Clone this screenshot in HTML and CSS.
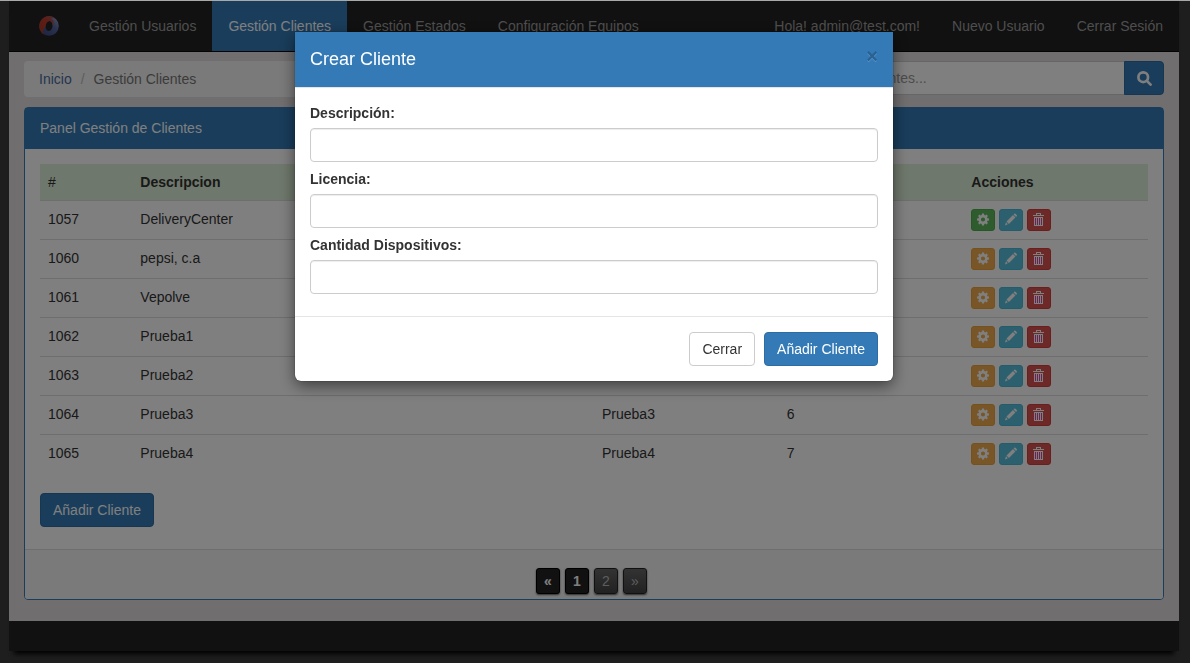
FILE: index.html
```html
<!DOCTYPE html>
<html lang="es">
<head>
<meta charset="utf-8">
<meta name="viewport" content="width=device-width, initial-scale=1">
<title>Gestión Clientes</title>
<link rel="stylesheet" href="styles.css">
</head>
<body>
<svg class="sprite" aria-hidden="true">
  <symbol id="cog" viewBox="0 0 12 12"><path fill-rule="evenodd" d="M5 0h2l.3 1.6 1 .4 1.3-.9 1.3 1.3-.9 1.3.4 1L12 5v2l-1.6.3-.4 1 .9 1.3-1.3 1.3-1.3-.9-1 .4L7 12H5l-.3-1.6-1-.4-1.3.9-1.3-1.3.9-1.3-.4-1L0 7V5l1.600-.3.4-1-.9-1.300 1.300-1.300 1.300.9 1-.4zM6 3.900A2.100 2.100 0 1 0 6 8.100 2.100 2.100 0 0 0 6 3.900z"/></symbol>
  <symbol id="pencil" viewBox="0 0 12 12"><path d="M0 12l1-3.300L2.800 10.700zM1.500 8L8 1.600 10.400 4 3.900 10.500zM8.600 1L9.300.3Q9.800-.2 10.400.3L11.700 1.600Q12.200 2.200 11.700 2.700L11 3.400z"/></symbol>
  <symbol id="trash" viewBox="0 0 12 13"><path class="bin" d="M1 4h9v8H1z"/><path fill-rule="evenodd" d="M3 0h5v2h3v1H0V2h3zM4 1v1h3V1zM1 4h9v9H1zM2 5V12h1V5zM4 5V12h1V5zM6 5V12h1V5zM8 5V12h1V5z"/></symbol>
</svg>

<div class="page">
  <nav class="navbar">
    <a class="brand" href="#" aria-label="Inicio">
      <svg class="logo" viewBox="0 0 20 20" aria-hidden="true">
        <defs>
          <linearGradient id="red" x1="1" y1="0" x2="0" y2="1"><stop offset="0" stop-color="#8a5f60"/><stop offset=".4" stop-color="#c0392b"/><stop offset="1" stop-color="#a23b20"/></linearGradient>
          <linearGradient id="blue" x1="1" y1="0" x2="0" y2="1"><stop offset="0" stop-color="#a9a4c2"/><stop offset=".4" stop-color="#53649f"/><stop offset="1" stop-color="#363f7c"/></linearGradient>
        </defs>
        <path fill="url(#blue)" fill-rule="evenodd" d="M10 .2A9.800 9.800 0 1 1 10 19.800 9.800 9.800 0 0 1 10 .2zM10.500 5C8 5 6.500 8 6.500 10.500S8 15 10 15 13.500 12 13.500 9.500 12.500 5 10.500 5z"/>
        <path fill="url(#red)" d="M16 2.200Q11-1.500 6 1 0 4.500.2 11 .8 16 5 18.600 2.500 14 6.500 10.500 7 5.500 10.500 5 13.500 5.500 13.500 9.500 16.500 4.500 12 2.500 14 1.500 16 2.200z"/>
      </svg>
    </a>
    <ul class="nav">
      <li><a href="#">Gestión Usuarios</a></li>
      <li><a class="active" href="#">Gestión Clientes</a></li>
      <li><a href="#">Gestión Estados</a></li>
      <li><a href="#">Configuración Equipos</a></li>
    </ul>
    <ul class="nav nav-right">
      <li><a href="#">Hola! admin@test.com!</a></li>
      <li><a href="#">Nuevo Usuario</a></li>
      <li><a href="#">Cerrar Sesión</a></li>
    </ul>
  </nav>

  <main class="content">
    <div class="toolbar">
      <ol class="breadcrumb">
        <li><a href="#">Inicio</a></li>
        <li>Gestión Clientes</li>
      </ol>
      <form class="search">
        <input type="text" aria-label="Buscar clientes" placeholder="Buscar Clientes...">
        <button type="button" aria-label="Buscar">
          <svg viewBox="0 0 14 14" aria-hidden="true"><circle cx="5.800" cy="5.800" r="4.500"/><path d="M9.200 9.200L12.700 12.700"/></svg>
        </button>
      </form>
    </div>

    <section class="panel">
      <header class="panel-heading">Panel Gestión de Clientes</header>
      <div class="panel-body">
        <table class="clients">
          <thead>
            <tr><th class="col-id">#</th><th class="col-name">Descripcion</th><th class="col-mid">Licencia</th><th class="col-mid">Dispositivos</th><th class="col-mid">Acciones</th></tr>
          </thead>
          <tbody>
            <tr><td>1057</td><td>DeliveryCenter</td><td></td><td></td><td><div class="actions"><button class="green" aria-label="Configurar"><svg><use href="#cog"/></svg></button><button class="cyan" aria-label="Editar"><svg><use href="#pencil"/></svg></button><button class="red" aria-label="Eliminar"><svg><use href="#trash"/></svg></button></div></td></tr>
            <tr><td>1060</td><td>pepsi, c.a</td><td></td><td></td><td><div class="actions"><button class="orange" aria-label="Configurar"><svg><use href="#cog"/></svg></button><button class="cyan" aria-label="Editar"><svg><use href="#pencil"/></svg></button><button class="red" aria-label="Eliminar"><svg><use href="#trash"/></svg></button></div></td></tr>
            <tr><td>1061</td><td>Vepolve</td><td></td><td></td><td><div class="actions"><button class="orange" aria-label="Configurar"><svg><use href="#cog"/></svg></button><button class="cyan" aria-label="Editar"><svg><use href="#pencil"/></svg></button><button class="red" aria-label="Eliminar"><svg><use href="#trash"/></svg></button></div></td></tr>
            <tr><td>1062</td><td>Prueba1</td><td></td><td></td><td><div class="actions"><button class="orange" aria-label="Configurar"><svg><use href="#cog"/></svg></button><button class="cyan" aria-label="Editar"><svg><use href="#pencil"/></svg></button><button class="red" aria-label="Eliminar"><svg><use href="#trash"/></svg></button></div></td></tr>
            <tr><td>1063</td><td>Prueba2</td><td></td><td></td><td><div class="actions"><button class="orange" aria-label="Configurar"><svg><use href="#cog"/></svg></button><button class="cyan" aria-label="Editar"><svg><use href="#pencil"/></svg></button><button class="red" aria-label="Eliminar"><svg><use href="#trash"/></svg></button></div></td></tr>
            <tr><td>1064</td><td>Prueba3</td><td>Prueba3</td><td>6</td><td><div class="actions"><button class="orange" aria-label="Configurar"><svg><use href="#cog"/></svg></button><button class="cyan" aria-label="Editar"><svg><use href="#pencil"/></svg></button><button class="red" aria-label="Eliminar"><svg><use href="#trash"/></svg></button></div></td></tr>
            <tr><td>1065</td><td>Prueba4</td><td>Prueba4</td><td>7</td><td><div class="actions"><button class="orange" aria-label="Configurar"><svg><use href="#cog"/></svg></button><button class="cyan" aria-label="Editar"><svg><use href="#pencil"/></svg></button><button class="red" aria-label="Eliminar"><svg><use href="#trash"/></svg></button></div></td></tr>
          </tbody>
        </table>
        <button class="btn btn-primary" type="button">Añadir Cliente</button>
      </div>
      <footer class="panel-footer">
        <a class="page-link current" href="#">«</a>
        <a class="page-link current" href="#">1</a>
        <a class="page-link" href="#">2</a>
        <a class="page-link" href="#">»</a>
      </footer>
    </section>
  </main>
  <div class="page-footer"></div>
</div>

<div class="backdrop">
  <form class="modal" role="dialog" aria-modal="true" aria-labelledby="modal-title">
    <div class="modal-header">
      <h1 id="modal-title">Crear Cliente</h1>
      <button class="close" type="button" aria-label="Cerrar ventana">×</button>
    </div>
    <div class="modal-body">
      <label for="descripcion">Descripción:</label>
      <input id="descripcion" type="text">
      <label for="licencia">Licencia:</label>
      <input id="licencia" type="text">
      <label for="cantidad">Cantidad Dispositivos:</label>
      <input id="cantidad" type="text">
    </div>
    <div class="modal-footer">
      <button class="btn btn-default" type="button">Cerrar</button>
      <button class="btn btn-primary" type="button">Añadir Cliente</button>
    </div>
  </form>
</div>
</body>
</html>
```
FILE: styles.css
```css
* { box-sizing: border-box; }

body {
  margin: 0;
  padding: 0 11px 11px 9px;
  border-top: 1px solid #a8aaa9;
  background: #3c3c3c;
  color: #333;
  font: 14px/20px "Liberation Sans", Arial, sans-serif;
}

a { color: inherit; text-decoration: none; }
ul, ol { margin: 0; padding: 0; list-style: none; }
button, input { font: inherit; }
.sprite { position: absolute; width: 0; height: 0; }

.page { box-shadow: 0 8px 5px -5px #000; }

/* Top navigation */
.navbar {
  display: flex;
  padding-left: 15px;
  border-bottom: 1px solid #080808;
  background: #222;
  color: #9d9d9d;
}
.brand { padding: 15px 14px 15px 15px; }
.logo { display: block; width: 20px; height: 20px; }
.nav { display: flex; white-space: nowrap; }
.nav a { display: block; padding: 15px 16px; }
.nav .active { background: #337ab7; color: #fff; }
.nav-right { margin-left: auto; }

/* Breadcrumb and search */
.content { padding: 9px 15px 21px; background: #e0dcde; }
.toolbar {
  display: grid;
  grid-template-columns: 25fr 12fr;
  gap: 30px;
  align-items: start;
  margin-bottom: 10px;
}
.breadcrumb {
  display: flex;
  padding: 8px 15px;
  border-radius: 4px;
  background: #f5f5f5;
  color: #777;
}
.breadcrumb a { color: #486c9e; }
.breadcrumb li + li::before { content: "/"; padding: 0 9px; color: #bbb; }
.search { display: flex; }
.search input {
  flex: 1;
  min-width: 0;
  height: 34px;
  padding: 6px 12px;
  border: 1px solid #ccc;
  border-right: 0;
  border-radius: 4px 0 0 4px;
  background: #fff;
}
.search input::placeholder { color: #999; opacity: 1; }
.search button {
  width: 40px;
  padding: 0 0 2px;
  border: 1px solid #2e6da4;
  border-radius: 0 4px 4px 0;
  background: #337ab7;
}
.search svg {
  width: 15px;
  height: 15px;
  vertical-align: middle;
  fill: none;
  stroke: #fff;
  stroke-width: 2.500;
  stroke-linecap: round;
}

/* Clients panel */
.panel { border: 1px solid #337ab7; border-radius: 4px; background: #fff; }
.panel-heading { padding: 10px 15px 11px; background: #337ab7; color: #fff; }
.panel-body { padding: 15px 15px 22px; }
.clients {
  width: 100%;
  margin-bottom: 19px;
  border-collapse: collapse;
  table-layout: fixed;
  text-align: left;
}
.clients th { padding: 8px; background: #dff0d8; }
.clients .col-id { width: 8.333%; font-weight: normal; }
.clients .col-name { width: 41.667%; }
.clients .col-mid { width: 16.667%; }
.clients td { height: 39px; padding: 8px 8px 10px; border-top: 1px solid #ddd; vertical-align: top; }
.actions { display: flex; gap: 4px; height: 20px; }
.actions button {
  width: 24px;
  height: 22px;
  padding: 0;
  border: 1px solid;
  border-radius: 3px;
}
.actions svg { display: block; width: 12px; height: 13px; margin: 0 auto 2px; fill: #fff; }
.actions .green { background: #5cb85c; border-color: #4cae4c; }
.actions .orange { background: #f0ad4e; border-color: #eea236; }
.actions .cyan { background: #5bc0de; border-color: #46b8da; }
.actions .red { background: #d9534f; border-color: #d43f3a; }
.bin { fill: #d943a0; }

.btn { height: 34px; padding: 0 12px; border: 1px solid; border-radius: 4px; }
.btn-primary { border-color: #2e6da4; background: #337ab7; color: #fff; }
.btn-default { border-color: #ccc; background: #fff; color: #333; }

.panel-footer {
  display: flex;
  justify-content: center;
  gap: 5px;
  padding: 18px 20px 5px 15px;
  border-top: 1px solid #ddd;
  border-radius: 0 0 3px 3px;
  background: #f5f5f5;
}
.page-link {
  width: 24px;
  height: 26px;
  border: 1px solid #222;
  border-radius: 3px;
  background: linear-gradient(#666, #444);
  box-shadow: 0 1px 2px #555;
  color: #bbb;
  line-height: 24px;
  text-align: center;
}
.page-link.current { border-color: #000; background: #222; color: #fff; font-weight: bold; }

.page-footer { height: 30px; background: #222; }

/* Dialog */
.backdrop {
  position: fixed;
  inset: 1px 0 0;
  padding: 31px 10px 30px 8px;
  background: rgba(0, 0, 0, .5);
}
.modal {
  max-width: 598px;
  margin: 0 auto;
  overflow: hidden;
  border-radius: 0 0 6px 6px;
  background: #fff;
  box-shadow: 0 5px 15px rgba(0, 0, 0, .5), 0 0 1px #000;
}
.modal-header {
  display: flex;
  justify-content: space-between;
  align-items: flex-start;
  padding: 15px;
  border-bottom: 1px solid #e5e5e5;
  background: #337ab7;
}
.modal-header h1 { margin: 0; color: #fff; font-size: 18px; line-height: 25px; font-weight: 500; }
.close {
  padding: 0;
  border: 0;
  background: none;
  color: #296292;
  font-size: 20px;
  line-height: 18px;
  font-weight: bold;
  text-shadow: 0 1px 0 #5c95c5;
}
.modal-body { padding: 15px 15px 22px; }
.modal-body label { display: block; margin-bottom: 5px; font-weight: bold; }
.modal-body input {
  display: block;
  width: 100%;
  height: 34px;
  padding: 6px 12px;
  border: 1px solid #ccc;
  border-radius: 4px;
  box-shadow: inset 0 1px 1px rgba(0, 0, 0, .075);
}
.modal-body input + label { margin-top: 7px; }
.modal-footer {
  display: flex;
  justify-content: flex-end;
  gap: 9px;
  padding: 15px;
  border-top: 1px solid #e5e5e5;
}
```
